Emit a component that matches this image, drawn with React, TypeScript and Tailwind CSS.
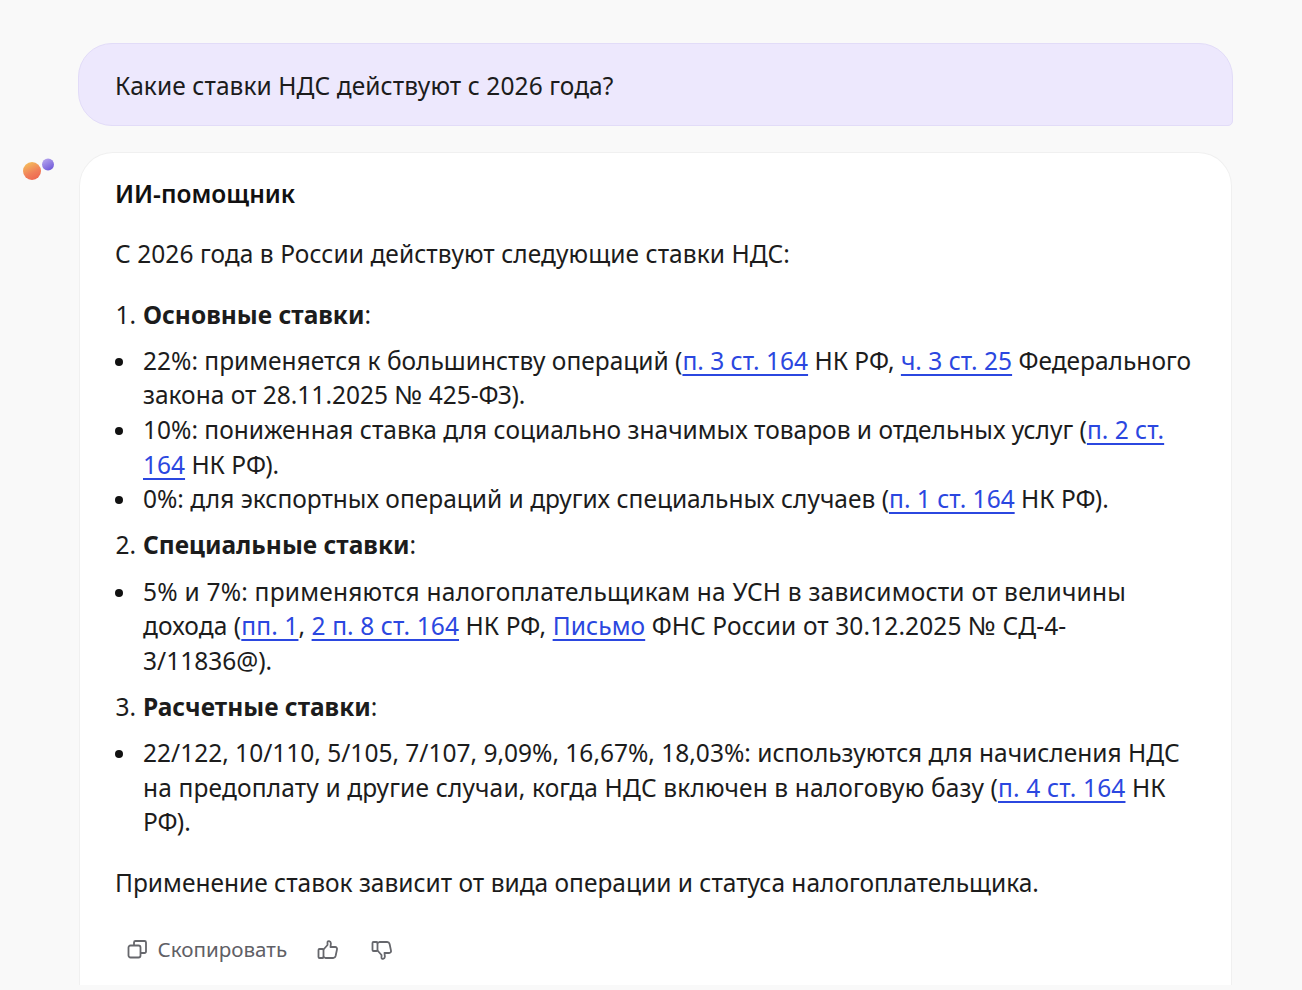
const A = ({ children }: { children: React.ReactNode }) => (
  <a className="text-[#2b47e0] underline decoration-[1.5px] underline-offset-[4px]" href="#">{children}</a>
);

const N = () => <span className="[font-family:'Liberation_Sans',sans-serif] text-[26px]">№</span>;

const Bullets = ({ items }: { items: React.ReactNode[] }) => (
  <ul className="pl-[28px] my-[11.6px]">
    {items.map((it, i) => (
      <li key={i} className="relative whitespace-nowrap before:absolute before:left-[-28px] before:top-[14px] before:h-[8px] before:w-[8px] before:rounded-full before:bg-[#111] before:content-['']">{it}</li>
    ))}
  </ul>
);

const Head = ({ n, t }: { n: number; t: string }) => (
  <div className="flex"><span className="w-[28px] text-right pr-[7px] shrink-0">{n}.</span><span><b className="font-bold">{t}</b>:</span></div>
);

export default function App() {
  return (
    <div className="h-[990px] overflow-hidden bg-[#f9f9f9] pl-[78px] pr-[69px] pt-[43px] text-[#1c1c1c] text-[24.5px] leading-[34.6px] [font-family:'Noto_Sans',sans-serif]">
      <div className="h-[83px] rounded-[34px] rounded-br-[5px] border border-[#e2dcf8] bg-[#ede8fd] px-[36px] pt-[3px] flex items-center tracking-[0.08px]">
        Какие ставки НДС действуют с 2026 года?
      </div>
      <div className="relative mt-[26px]">
        <svg className="absolute left-[-55px] top-[6px]" width="34" height="24" viewBox="0 0 34 24">
          <defs>
            <linearGradient id="o" x1="0.2" y1="0" x2="0.7" y2="1"><stop offset="0" stopColor="#f5c15c" /><stop offset="0.6" stopColor="#f0805a" /><stop offset="1" stopColor="#ee6650" /></linearGradient>
            <linearGradient id="p" x1="0.2" y1="0" x2="0.8" y2="1"><stop offset="0" stopColor="#b7a6ee" /><stop offset="1" stopColor="#6c55d8" /></linearGradient>
          </defs>
          <circle cx="9" cy="13" r="9" fill="url(#o)" />
          <circle cx="25" cy="6.500" r="6" fill="url(#p)" />
        </svg>
        <div className="ml-px mr-px h-[833px] rounded-t-[34px] border border-b-0 border-[#f0f0f0] bg-white px-[35px] pt-[23.5px]">
          <div className="font-semibold text-[#111]">ИИ-помощник</div>
          <p className="mt-[26px] tracking-[0.06px]">С 2026 года в России действуют следующие ставки НДС:</p>
          <div className="mt-[26px]"><Head n={1} t="Основные ставки" /></div>
          <Bullets items={[
            <>22%: применяется к большинству операций (<A>п. 3 ст. 164</A> НК РФ, <A>ч. 3 ст. 25</A> Федерального<br />закона от 28.11.2025 <N /> 425-ФЗ).</>,
            <>10%: пониженная ставка для социально значимых товаров и отдельных услуг (<A>п. 2 ст.</A><br /><A>164</A> НК РФ).</>,
            <>0%: для экспортных операций и других специальных случаев (<A>п. 1 ст. 164</A> НК РФ).</>,
          ]} />
          <Head n={2} t="Специальные ставки" />
          <Bullets items={[
            <><span className="tracking-[0.22px]">5% и 7%: применяются налогоплательщикам на УСН в зависимости от величины</span><br /><span className="tracking-[0.1px]">дохода (<A>пп. 1</A>, <A>2 п. 8 ст. 164</A> НК РФ, <A>Письмо</A> ФНС России от 30.12.2025 <N /> СД-4-</span><br />3/11836@).</>,
          ]} />
          <Head n={3} t="Расчетные ставки" />
          <Bullets items={[
            <>22/122, 10/110, 5/105, 7/107, 9,09%, 16,67%, 18,03%: используются для начисления НДС<br /><span className="tracking-[0.15px]">на предоплату и другие случаи, когда НДС включен в налоговую базу (<A>п. 4 ст. 164</A> НК</span><br />РФ).</>,
          ]} />
          <p className="mt-[26px]">Применение ставок зависит от вида операции и статуса налогоплательщика.</p>
          <div className="mt-[31.5px] ml-[12px] flex items-center text-[#5f6066] text-[20.6px] leading-[34px]">
            <svg width="21" height="21" viewBox="0 0 21 21" fill="none" stroke="#66676c" strokeWidth="1.8" strokeLinejoin="round">
              <rect x="1.5" y="6.5" width="12" height="12" rx="2" />
              <path d="M7 6.5V3.5a1.5 1.5 0 0 1 1.5-1.5h9A1.5 1.5 0 0 1 19 3.5v9a1.5 1.5 0 0 1-1.5 1.5h-4" />
            </svg>
            <span className="ml-[9.5px]">Скопировать</span>
            <svg className="ml-[30px] mt-[2px]" width="22" height="22" viewBox="0 0 22 22" fill="none" stroke="#66676c" strokeWidth="1.8" strokeLinejoin="round" strokeLinecap="round">
              <rect x="1.5" y="10" width="5" height="9" rx="1" />
              <path d="M6.5 10.5 10.5 6V3.2c0-1.6 3.200-1.600 3.400 1L13.500 8h4.600c1.400 0 2.200 1.200 1.900 2.400l-1.400 6.600c-.3 1.200-1.200 2-2.400 2H8.500l-2-1" />
            </svg>
            <svg className="ml-[32px] mt-[2px]" width="22" height="22" viewBox="0 0 22 22" fill="none" stroke="#66676c" strokeWidth="1.8" strokeLinejoin="round" strokeLinecap="round">
              <rect x="1.5" y="3" width="5" height="9" rx="1" />
              <path d="M6.5 11.500 10.500 16v2.800c0 1.600 3.200 1.600 3.400-1L13.500 14h4.600c1.400 0 2.200-1.200 1.900-2.400L18.600 5c-.3-1.200-1.200-2-2.400-2H8.500l-2 1" />
            </svg>
          </div>
        </div>
      </div>
    </div>
  );
}
